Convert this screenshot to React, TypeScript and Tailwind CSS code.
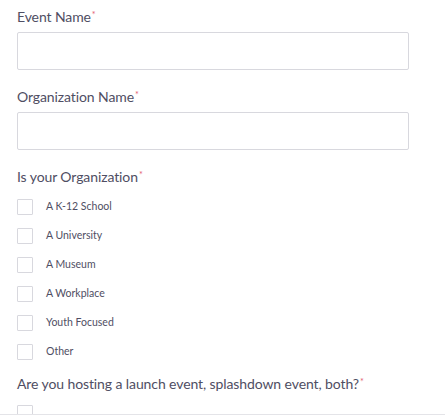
const options = ['A K-12 School', 'A University', 'A Museum', 'A Workplace', 'Youth Focused', 'Other'];

function Label({ text }: { text: string }) {
  return (
    <div className="text-[14px] leading-5 text-[#4f4e63] tracking-[-0.1px]">
      {text}
      <span className="text-[#e35d72] text-[9px] align-top relative top-[-2px] ml-[1px]">*</span>
    </div>
  );
}

function Checkbox({ label, last }: { label: string; last?: boolean }) {
  return (
    <label className="flex items-center h-[29px] gap-[13px]">
      <span className="w-4 h-4 border border-[#d8d8de] rounded-[1px] bg-white shrink-0" />
      <span className={'text-[10.5px] text-[#4f4e63] ' + (last ? 'relative top-[10px]' : '')}>{label}</span>
    </label>
  );
}

export default function App() {
  return (
    <div className="w-[445px] h-[417px] overflow-hidden bg-white relative" style={{ fontFamily: 'Lato, "Noto Sans", sans-serif' }}>
      <div className="pl-[17px] pt-[7px] w-[409px]">
        <Label text="Event Name" />
        <input className="mt-[5px] block w-full h-[38px] border border-[#d8d8de] rounded-[2px] outline-none" />

        <div className="mt-[17px]">
          <Label text="Organization Name" />
          <input className="mt-[5px] block w-full h-[38px] border border-[#d8d8de] rounded-[2px] outline-none" />
        </div>

        <div className="mt-[17px]">
          <Label text="Is your Organization" />
          <div className="mt-[5px] flex flex-col">
            {options.map((o) => (
              <Checkbox key={o} label={o} />
            ))}
          </div>
        </div>

        <div className="mt-[8px]">
          <Label text="Are you hosting a launch event, splashdown event, both?" />
          <div className="mt-[4px] flex flex-col">
            <Checkbox label="Launch Event" last />
          </div>
        </div>
      </div>
      <div className="absolute left-0 right-0 bottom-0 h-[3px] bg-white border-t border-[#e4e4e8]" />
    </div>
  );
}
